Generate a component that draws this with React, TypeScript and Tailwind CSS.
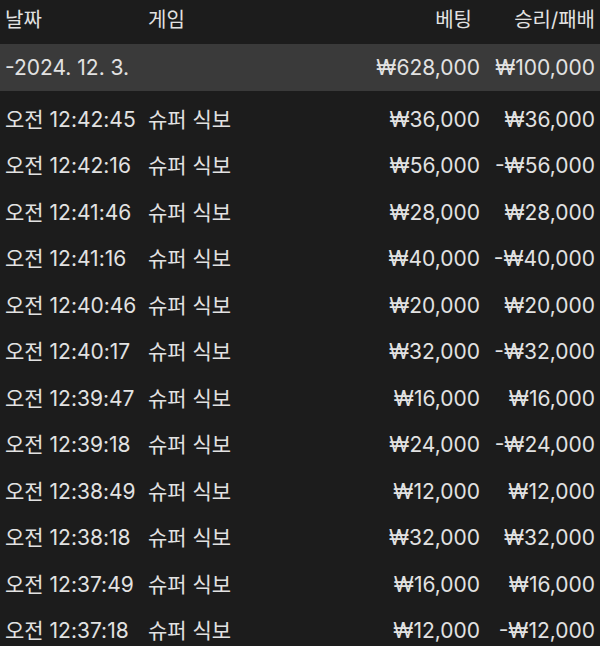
import React from 'react';

type Row = { time: string; bet: string; result: string };

const rows: Row[] = [
  { time: '오전 12:42:45', bet: '₩36,000', result: '₩36,000' },
  { time: '오전 12:42:16', bet: '₩56,000', result: '-₩56,000' },
  { time: '오전 12:41:46', bet: '₩28,000', result: '₩28,000' },
  { time: '오전 12:41:16', bet: '₩40,000', result: '-₩40,000' },
  { time: '오전 12:40:46', bet: '₩20,000', result: '₩20,000' },
  { time: '오전 12:40:17', bet: '₩32,000', result: '-₩32,000' },
  { time: '오전 12:39:47', bet: '₩16,000', result: '₩16,000' },
  { time: '오전 12:39:18', bet: '₩24,000', result: '-₩24,000' },
  { time: '오전 12:38:49', bet: '₩12,000', result: '₩12,000' },
  { time: '오전 12:38:18', bet: '₩32,000', result: '₩32,000' },
  { time: '오전 12:37:49', bet: '₩16,000', result: '₩16,000' },
  { time: '오전 12:37:18', bet: '₩12,000', result: '-₩12,000' },
];

const App: React.FC = () => (
  <div
    className="w-[600px] h-[646px] overflow-hidden bg-[#1c1c1c] text-[#e2e2e2] text-[21px] leading-none"
    style={{ fontFamily: 'Inter, "Noto Sans CJK KR", sans-serif' }}
  >
    <div className="grid grid-cols-[143px_1fr_auto_115px] items-center h-[44px] pl-[5px] pr-[5px] pb-1 text-[20px]">
      <span>날짜</span>
      <span>게임</span>
      <span className="text-right pr-[8px]">베팅</span>
      <span className="text-right">승리/패배</span>
    </div>
    <div className="grid grid-cols-[143px_1fr_auto_115px] items-center h-[47px] pl-[5px] pr-[5px] bg-[#3a3a3a]">
      <span className="col-span-2">-2024. 12. 3.</span>
      <span className="text-right">₩628,000</span>
      <span className="text-right">₩100,000</span>
    </div>
    <div className="mt-[5px]">
      {rows.map(r => (
        <div
          key={r.time}
          className="grid grid-cols-[143px_1fr_auto_115px] items-center h-[46.5px] pl-[5px] pr-[5px]"
        >
          <span>{r.time}</span>
          <span>슈퍼 식보</span>
          <span className="text-right">{r.bet}</span>
          <span className="text-right">{r.result}</span>
        </div>
      ))}
    </div>
  </div>
);

export default App;
